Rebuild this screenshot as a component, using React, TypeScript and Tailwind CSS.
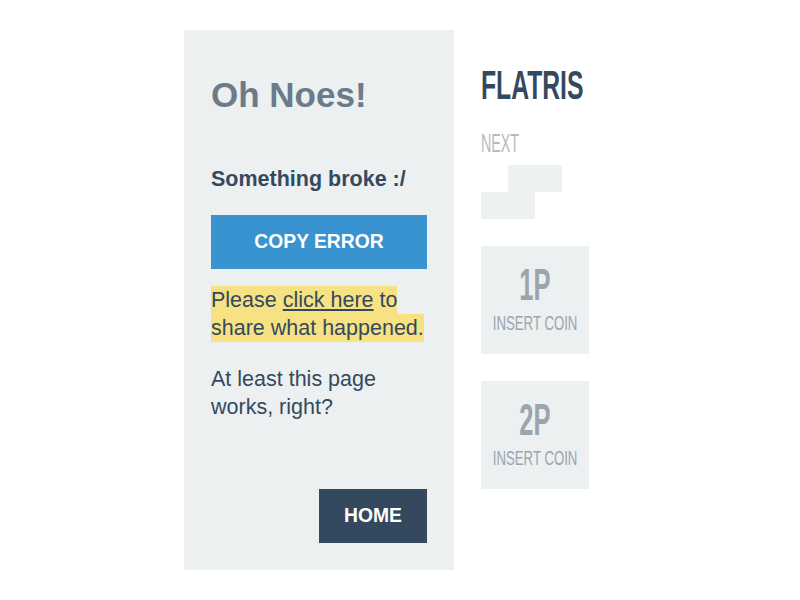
import React from "react";

function Cell({ filled }: { filled: boolean }) {
  return <div className={filled ? "h-[27px] w-[27px] bg-[#ecf0f1]" : "h-[27px] w-[27px]"} />;
}

function PlayerSlot({ label }: { label: string }) {
  return (
    <div className="flex h-[108px] w-[108px] flex-col items-center bg-[#ecf0f1] pt-[17px] text-[#9aa5ad]">
      <span className="inline-block scale-x-[0.58] text-[44px] leading-none font-bold">{label}</span>
      <span className="mt-[6px] inline-block scale-x-[0.66] text-[20px] leading-none whitespace-nowrap">
        INSERT COIN
      </span>
    </div>
  );
}

export default function App() {
  const next = [
    [0, 1, 1],
    [1, 1, 0],
  ];

  return (
    <div className="flex min-h-screen items-center justify-center bg-white font-['Liberation_Sans',Arial,sans-serif]">
      <div className="flex w-[432px] gap-[27px]">
        <div className="flex h-[540px] w-[270px] shrink-0 flex-col bg-[#ecf0f1] p-[27px] text-[#34495e]">
          <h1 className="mt-[20px] text-[35px] leading-none font-bold text-[#6b7b8b]">Oh Noes!</h1>
          <p className="mt-[57px] text-[21.5px] leading-none font-bold">Something broke :/</p>
          <button
            type="button"
            className="mt-[24px] flex h-[54px] w-full items-center justify-center bg-[#3993d0] text-[19.3px] leading-none font-bold text-white"
          >
            COPY ERROR
          </button>
          <p className="mt-[17px] text-[21.5px] leading-[28px]">
            <span className="bg-[#f6e283] pt-[2px] pb-[2px] box-decoration-clone">
              Please{" "}
              <a href="#" className="underline decoration-[2px] underline-offset-[2px]">
                click here
              </a>{" "}
              to share what happened.
            </span>
          </p>
          <p className="mt-[23px] text-[21.5px] leading-[28px]">At least this page works, right?</p>
          <button
            type="button"
            className="mt-auto flex h-[54px] w-[108px] items-center justify-center self-end bg-[#34495e] text-[19.3px] leading-none font-bold text-white"
          >
            HOME
          </button>
        </div>

        <div className="flex h-[540px] w-[108px] shrink-0 flex-col">
          <h2 className="mt-[35px] inline-block origin-left scale-x-[0.61] text-[40.5px] leading-none font-bold whitespace-nowrap text-[#34495e]">
            FLATRIS
          </h2>
          <p className="mt-[25px] inline-block origin-left scale-x-[0.57] text-[25px] leading-none text-[#b3bcc2]">
            NEXT
          </p>
          <div className="mt-[9px] flex flex-col">
            {next.map((row, r) => (
              <div key={r} className="flex">
                {row.map((c, i) => (
                  <Cell key={i} filled={c === 1} />
                ))}
              </div>
            ))}
          </div>
          <div className="mt-[27px] flex flex-col gap-[27px]">
            <PlayerSlot label="1P" />
            <PlayerSlot label="2P" />
          </div>
        </div>
      </div>
    </div>
  );
}
